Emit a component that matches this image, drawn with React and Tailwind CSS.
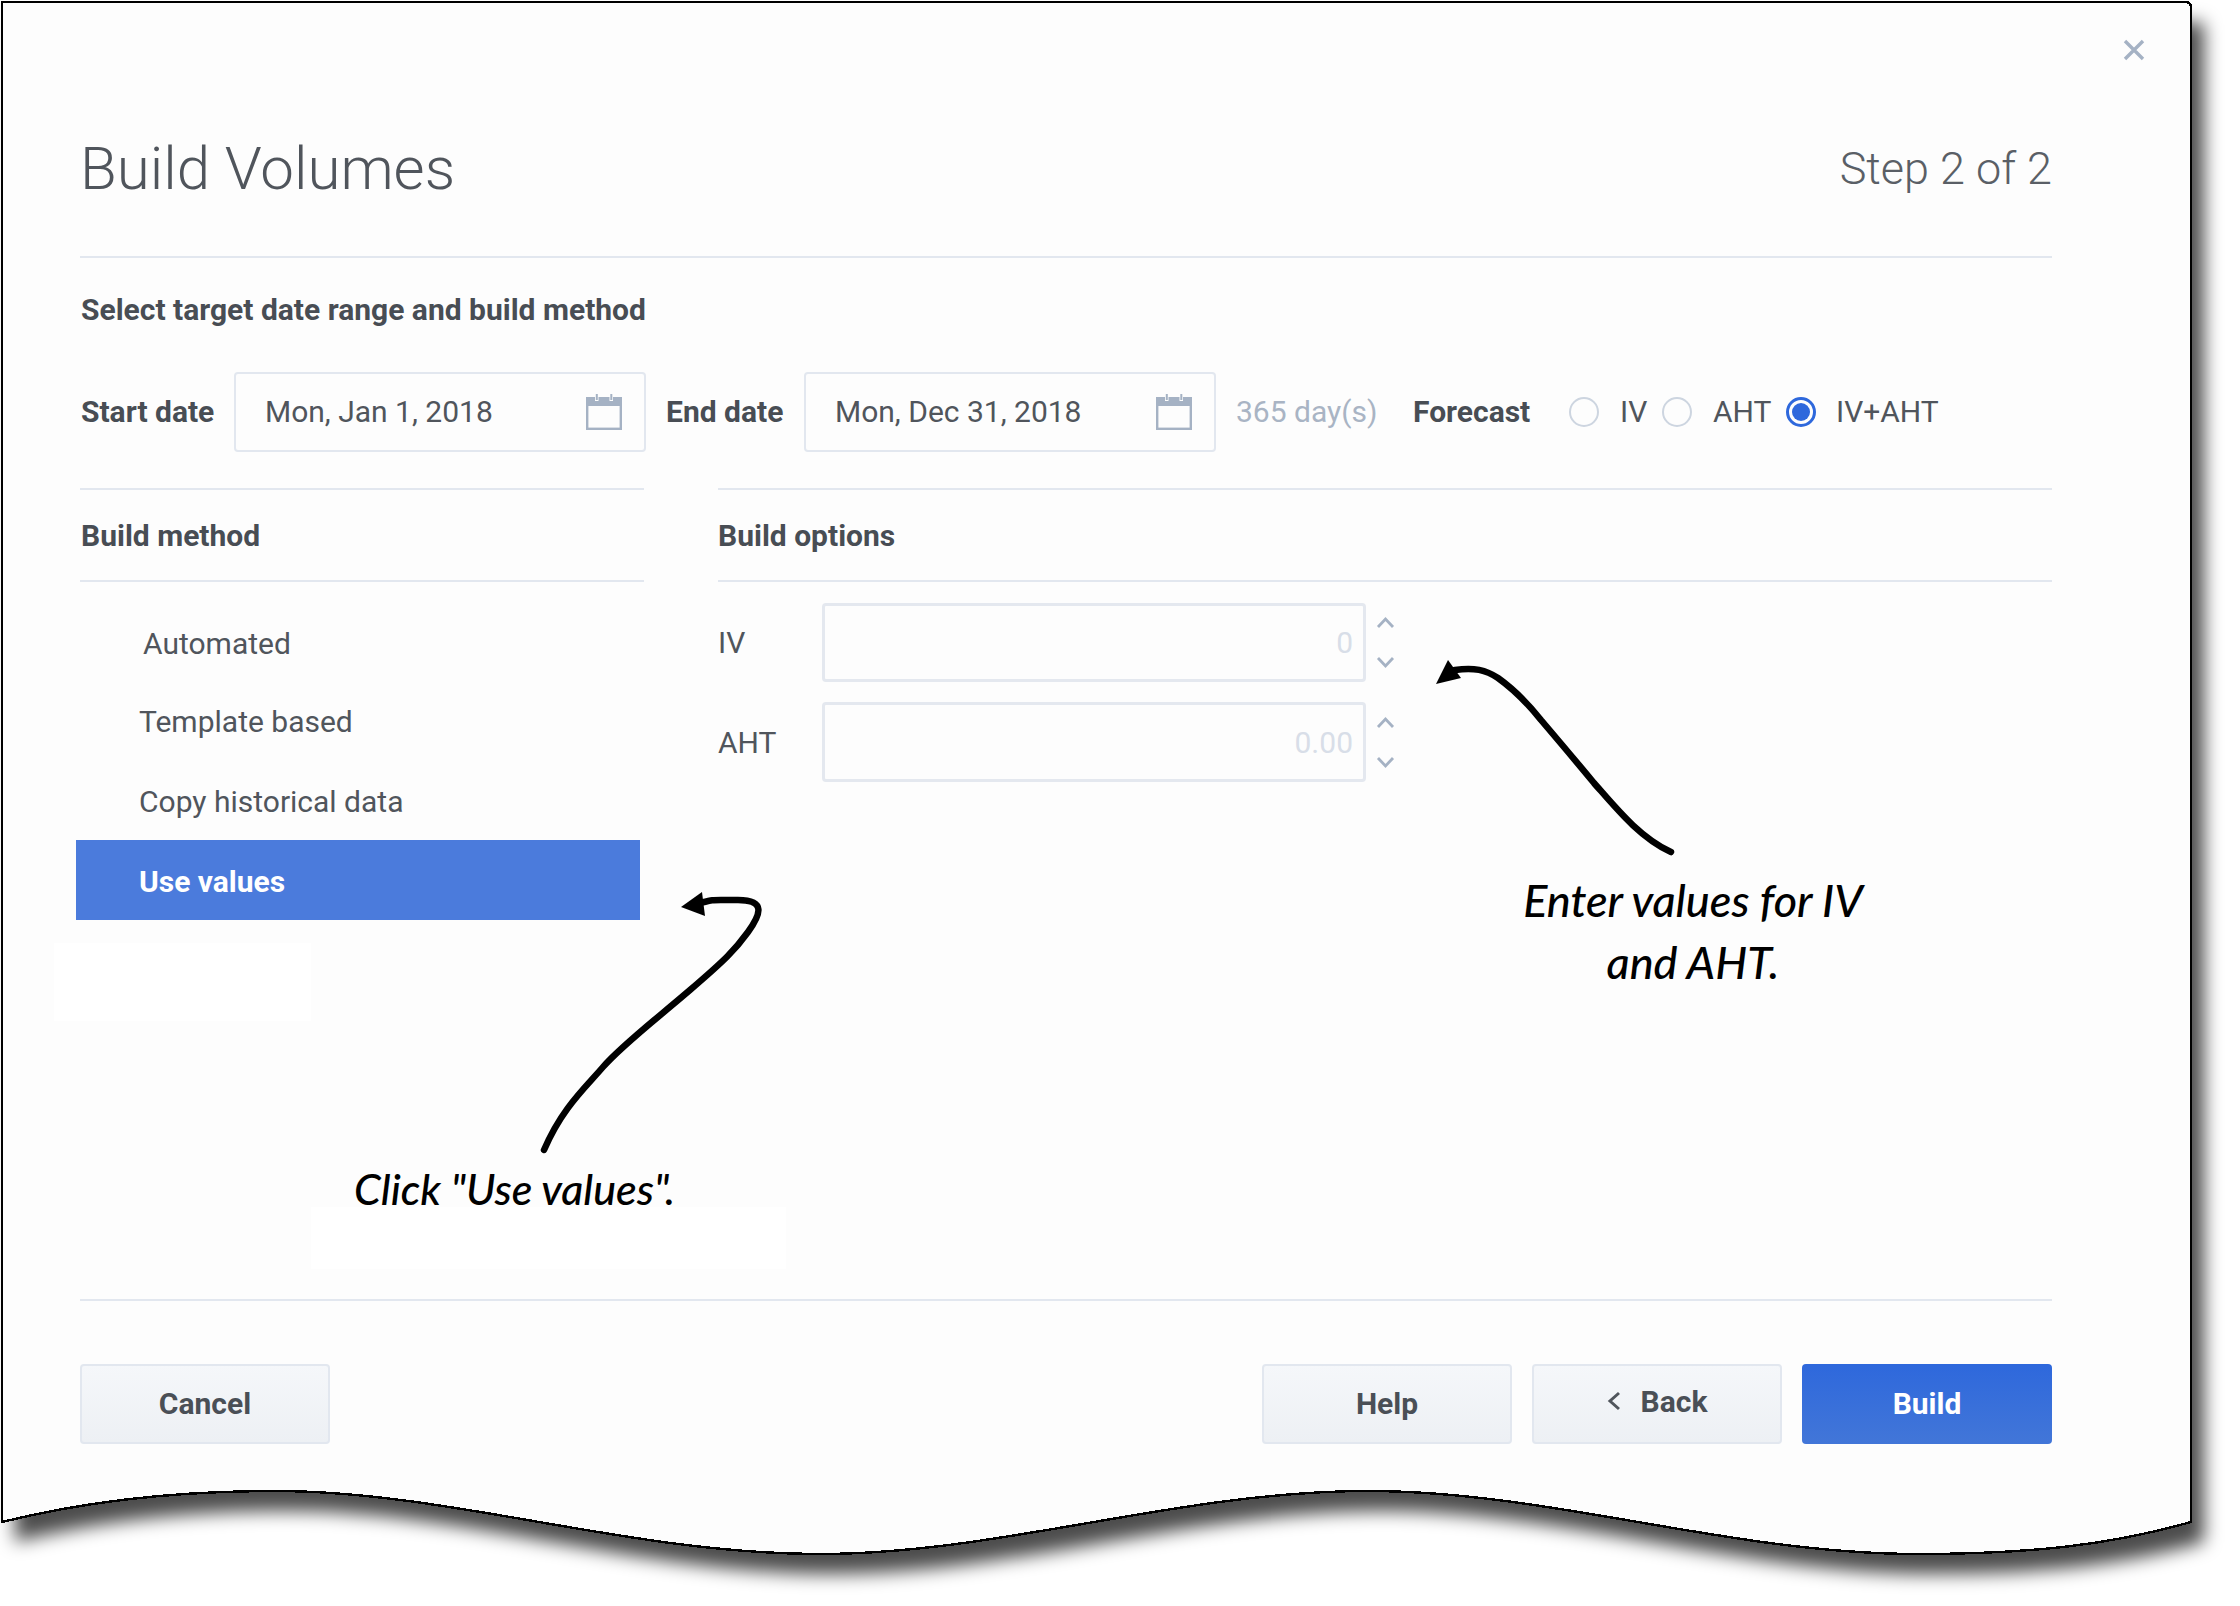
import React from "react";

function Paper() {
  const d = "M2 2 H2185 Q2191 2 2191 8 V1522 C2110 1545 2030 1554 1918 1554 C1730 1554 1550 1491 1368 1491 C1180 1491 1000 1554 820 1554 C630 1554 450 1491 275 1491 C180 1491 90 1500 2 1522 Z";
  return (
    <svg className="absolute left-0 top-0" width="2240" height="1606" viewBox="0 0 2240 1606" aria-hidden="true">
      <defs>
        <filter id="sh" x="-5%" y="-5%" width="110%" height="110%">
          <feGaussianBlur stdDeviation="9" />
        </filter>
      </defs>
      <path d={d} fill="#000" fillOpacity="0.7" transform="translate(13 20)" filter="url(#sh)" />
      <path d={d} fill="#fdfdfd" stroke="#000" strokeWidth="2.4" shapeRendering="crispEdges" />
      <rect x="54" y="943" width="257" height="78" fill="#fff" />
      <rect x="311" y="1207" width="475" height="62" fill="#fff" />
    </svg>
  );
}

function Calendar() {
  return (
    <svg width="36" height="36" viewBox="0 0 36 36" aria-hidden="true" className="shrink-0">
      <rect x="1.2" y="4.2" width="33.6" height="30.6" fill="#fdfdfd" stroke="#a5b2c4" strokeWidth="2.4" />
      <rect x="1" y="4" width="34" height="8" fill="#a5b2c4" />
      <rect x="9" y="1" width="3.5" height="6" fill="#fdfdfd" />
      <rect x="9.8" y="0" width="2" height="6" fill="#a5b2c4" />
      <rect x="23.5" y="1" width="3.5" height="6" fill="#fdfdfd" />
      <rect x="24.3" y="0" width="2" height="6" fill="#a5b2c4" />
    </svg>
  );
}

function DateField({ value }) {
  return (
    <div className="h-[80px] w-[412px] flex items-center justify-between pl-[29px] pr-[22px] border-[2.5px] border-[#e2e7ef] rounded-[4px] text-[30px] text-[#50555c]">
      <span>{value}</span>
      <Calendar />
    </div>
  );
}

function Radio({ checked }) {
  return checked ? (
    <span className="w-[30px] h-[30px] rounded-full border-[3px] border-[#2e68dc] flex items-center justify-center shrink-0">
      <span className="w-[18px] h-[18px] rounded-full bg-[#2e68dc]" />
    </span>
  ) : (
    <span className="w-[30px] h-[30px] rounded-full border-[2.5px] border-[#cdd5e0] shrink-0" />
  );
}

function Spin() {
  const up = "M2 11 L9.5 3 L17 11";
  const down = "M2 3 L9.5 11 L17 3";
  return (
    <div className="ml-[10px] w-[19px] h-[53px] flex flex-col justify-between">
      <svg width="19" height="14" viewBox="0 0 19 14" fill="none" stroke="#a5b2c4" strokeWidth="2.8" aria-hidden="true"><path d={up} /></svg>
      <svg width="19" height="14" viewBox="0 0 19 14" fill="none" stroke="#a5b2c4" strokeWidth="2.8" aria-hidden="true"><path d={down} /></svg>
    </div>
  );
}

function NumberRow({ label, value, h }) {
  return (
    <div className="flex items-center">
      <span className="w-[104px] text-[30px] text-[#50555c]">{label}</span>
      <div className={`w-[544px] ${h} flex items-center justify-end pr-[10px] border-[3px] border-[#e4e8ef] rounded-[4px] text-[30px] text-[#d8dee8]`}>
        {value}
      </div>
      <Spin />
    </div>
  );
}

function Btn({ children, className = "" }) {
  return (
    <button className={`w-[250px] h-[80px] flex items-center justify-center rounded-[4px] border-2 border-[#e2e7ef] bg-gradient-to-b from-[#f5f7fa] to-[#edf0f4] text-[30px] font-bold text-[#4a4f56] ${className}`}>
      {children}
    </button>
  );
}

function Arrows() {
  return (
    <svg className="absolute left-0 top-0 pointer-events-none" width="2240" height="1606" viewBox="0 0 2240 1606" fill="none" aria-hidden="true">
      <path d="M1671 852 C1640 838 1616 808 1594 783 C1575 760 1558 740 1541 720 C1525 700 1512 688 1498 678 C1486 670 1474 667 1455 670" stroke="#000" strokeWidth="6.5" strokeLinecap="round" />
      <path d="M1436 684 L1448 660 L1461 678 Z" fill="#000" />
      <path d="M544 1150 C562 1108 585 1088 603 1067 S655 1020 690 990 S735 950 748 932 S766 900 738 900 S715 899 700 903" stroke="#000" strokeWidth="6.5" strokeLinecap="round" />
      <path d="M681 907 L702 892 L705 916 Z" fill="#000" />
    </svg>
  );
}

export default function App() {
  return (
    <div className="relative w-[2240px] h-[1606px] bg-white overflow-hidden font-['Roboto',sans-serif] text-[#50555c]">
      <Paper />
      <div className="relative pl-[80px] w-[2052px]">
        <header className="h-[258px] pt-[81px] flex items-center justify-between border-b-2 border-[#e2e7ef]">
          <h1 className="text-[60px] font-light text-[#50555c] leading-none">Build Volumes</h1>
          <span className="text-[45px] font-light text-[#5a5f66] leading-none">Step 2 of 2</span>
        </header>

        <div className="h-[114px] pb-[11px] pl-[1px] flex items-center text-[30px] font-bold text-[#484d54]">
          Select target date range and build method
        </div>

        <div className="h-[79px] flex items-center text-[30px]">
          <span className="w-[154px] pl-[1px] font-bold text-[#484d54]">Start date</span>
          <DateField value="Mon, Jan 1, 2018" />
          <span className="ml-[20px] w-[138px] font-bold text-[#484d54]">End date</span>
          <DateField value="Mon, Dec 31, 2018" />
          <span className="ml-[20px] w-[177px] text-[#a9b4c4]">365 day(s)</span>
          <span className="w-[156px] font-bold text-[#484d54]">Forecast</span>
          <Radio />
          <span className="ml-[21px] w-[42px]">IV</span>
          <Radio />
          <span className="ml-[21px] w-[73px]">AHT</span>
          <Radio checked />
          <span className="ml-[20px]">IV+AHT</span>
        </div>

        <div className="h-[811px] mt-[37px] flex gap-[74px] text-[30px]">
          <section className="w-[564px]">
            <div className="h-[94px] pl-[1px] flex items-center border-y-2 border-[#e2e7ef] font-bold text-[#484d54]">Build method</div>
            <ul className="mt-[21px] -ml-[4px] w-[564px]">
              <li className="h-[78px] flex items-center pt-[2px] pl-[67px]">Automated</li>
              <li className="h-[80px] flex items-center pl-[63px]">Template based</li>
              <li className="h-[79px] flex items-center pt-[2px] pl-[63px]">Copy historical data</li>
              <li className="h-[80px] flex items-center pt-[2px] pl-[63px] bg-[#4b7bdc] text-white font-bold">Use values</li>
            </ul>
          </section>
          <section className="flex-1">
            <div className="h-[94px] flex items-center border-y-2 border-[#e2e7ef] font-bold text-[#484d54]">Build options</div>
            <div className="mt-[21px] flex flex-col gap-[20px]">
              <NumberRow label="IV" value="0" h="h-[79px]" />
              <NumberRow label="AHT" value="0.00" h="h-[80px]" />
            </div>
          </section>
        </div>

        <footer className="pt-[63px] flex justify-between items-start border-t-2 border-[#e2e7ef]">
          <Btn className="pb-[2px]">Cancel</Btn>
          <div className="flex gap-[20px]">
            <Btn className="pb-[2px]">Help</Btn>
            <Btn className="gap-[20px] pb-[6px]">
              <svg width="14" height="20" viewBox="0 0 14 20" fill="none" stroke="#50555c" strokeWidth="3" aria-hidden="true"><path d="M12 2 L3 10 L12 18" /></svg>
              <span>Back</span>
            </Btn>
            <button className="w-[250px] h-[80px] pb-[2px] rounded-[4px] bg-gradient-to-b from-[#2e68dc] to-[#4276d8] text-[30px] font-bold text-white">Build</button>
          </div>
        </footer>
      </div>

      <button aria-label="Close" className="absolute left-[2123px] top-[39px] w-[22px] h-[22px]">
        <svg width="22" height="22" viewBox="0 0 22 22" fill="none" stroke="#a5b2c4" strokeWidth="3.4" aria-hidden="true"><path d="M2 2 L20 20 M20 2 L2 20" /></svg>
      </button>

      <Arrows />
      <span className="absolute left-[354px] top-[1166px] text-[43px] italic font-medium font-['Lato',sans-serif] text-black leading-[46px] whitespace-nowrap">Click "Use values".</span>
      <div className="absolute left-[1493px] top-[869px] w-[400px] text-center text-[45px] italic font-medium font-['Lato',sans-serif] text-black leading-[62px]">
        <div>Enter values for IV</div>
        <div>and AHT.</div>
      </div>
    </div>
  );
}
